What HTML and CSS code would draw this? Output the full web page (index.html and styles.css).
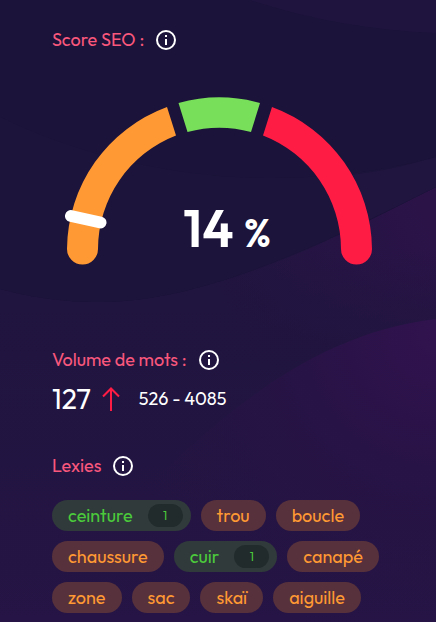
FILE: index.html
```html
<!DOCTYPE html>
<html lang="fr">
<head>
    <meta charset="UTF-8">
    <title>Score SEO</title>
    <meta name="viewport" content="width=device-width, initial-scale=1.0">
    <link rel="stylesheet" href="styles.css">
</head>
<body>
<!-- waves -->
<svg class="waves" viewBox="0 0 436 622" preserveAspectRatio="none" aria-hidden="true">
    <defs>
        <linearGradient id="base" gradientUnits="userSpaceOnUse" x1="0" y1="300" x2="0" y2="622">
            <stop offset="0" stop-color="#20153f"/>
            <stop offset="1" stop-color="#251445"/>
        </linearGradient>
        <linearGradient id="band" gradientUnits="userSpaceOnUse" x1="230" y1="320" x2="430" y2="220">
            <stop offset="0" stop-color="#2b1348" stop-opacity="0"/>
            <stop offset="1" stop-color="#2b1348"/>
        </linearGradient>
        <linearGradient id="fade" gradientUnits="userSpaceOnUse" x1="0" y1="250" x2="0" y2="370">
            <stop offset="0" stop-color="#20153f" stop-opacity="0"/>
            <stop offset="1" stop-color="#20153f"/>
        </linearGradient>
        <radialGradient id="glow" gradientUnits="userSpaceOnUse" cx="436" cy="335" r="330">
            <stop offset="0" stop-color="#31124e"/>
            <stop offset="0.4" stop-color="#281346"/>
            <stop offset="1" stop-color="#241443" stop-opacity="0"/>
        </radialGradient>
    </defs>
    <rect width="436" height="622" fill="url(#base)"/>
    <path d="M150 300C270 275 350 230 436 187V370H150Z" fill="url(#band)"/>
    <path d="M150 250H436V370H150Z" fill="url(#fade)"/>
    <path d="M436 319C300 335 210 430 130 500L100 622H436Z" fill="url(#glow)"/>
    <path d="M0 0H436V187C350 230 210 303 100 302C60 302 25 296 0 289Z" fill="#1b1339"/>
    <path d="M0 117C130 180 290 196 436 157V187C350 230 210 303 100 302C60 302 25 296 0 289Z" fill="#1c143a"/>
    <path d="M436 157V187C410 200 385 212 360 224L330 177C368 174 402 167 436 157Z" fill="#1f153e"/>
    <path d="M250 0C310 20 375 31 436 33V0Z" fill="#1f143e"/>
</svg>

<main class="panel">
    <section class="score">
        <div class="title">
            <h2>Score SEO :</h2>
            <button class="info" type="button" aria-label="Score SEO">
                <svg viewBox="0 0 20 20"><circle cx="10" cy="10" r="9"/><path d="M10 9v6M10 5v2"/></svg>
            </button>
        </div>
        <div class="gauge">
            <svg viewBox="0 0 308 170" aria-hidden="true">
                <path fill="#ff9933" d="M102 12A152.5 152.5 0 0 0 2 154A15.5 15.5 0 0 0 33 154A122 122 0 0 1 111 40.5Z"/>
                <path fill="#77df5a" d="M113.5 8A152.5 152.5 0 0 1 195 8L186 37A122 122 0 0 0 122.5 37Z"/>
                <path fill="#ff1c44" d="M207 12A152.5 152.5 0 0 1 307 154A15.5 15.5 0 0 1 276 154A122 122 0 0 0 198 40.5Z"/>
                <path class="needle" d="M6 121L35.5 127.5"/>
            </svg>
            <p class="value">14 <span>%</span></p>
        </div>
    </section>

    <section class="volume">
        <div class="title">
            <h2>Volume de mots :</h2>
            <button class="info" type="button" aria-label="Volume de mots">
                <svg viewBox="0 0 20 20"><circle cx="10" cy="10" r="9"/><path d="M10 9v6M10 5v2"/></svg>
            </button>
        </div>
        <div class="words">
            <strong>127</strong>
            <svg class="arrow" viewBox="0 0 18 24" aria-hidden="true"><path d="M9 24V2M1 9.5L9 1.5L17 9.5"/></svg>
            <span class="range">526 - 4085</span>
        </div>
    </section>

    <section class="lexies">
        <div class="title">
            <h2>Lexies</h2>
            <button class="info" type="button" aria-label="Lexies">
                <svg viewBox="0 0 20 20"><circle cx="10" cy="10" r="9"/><path d="M10 9v6M10 5v2"/></svg>
            </button>
        </div>
        <ul class="tags">
            <li class="tag found">ceinture <span class="count">1</span></li>
            <li class="tag">trou</li>
            <li class="tag">boucle</li>
            <li class="tag">chaussure</li>
            <li class="tag found">cuir <span class="count">1</span></li>
            <li class="tag">canapé</li>
            <li class="tag">zone</li>
            <li class="tag">sac</li>
            <li class="tag">skaï</li>
            <li class="tag">aiguille</li>
        </ul>
    </section>
</main>
</body>
</html>
```
FILE: styles.css
```css
* {
    margin: 0;
    padding: 0;
    box-sizing: border-box;
}

body {
    position: relative;
    min-height: 100vh;
    background: #251445;
    color: white;
    font-family: Outfit, Lato, sans-serif;
    font-size: 18px;
    line-height: 24px;
}

.waves {
    position: absolute;
    top: 0;
    left: 0;
    width: 100%;
    height: 100%;
    z-index: -1;
}

.panel {
    padding: 28px 52px 9px;
}

/* titles */
.title {
    display: flex;
    align-items: center;
    gap: 12px;
}

.title h2 {
    color: #f9577c;
    font-size: 18px;
    font-weight: 400;
}

.info {
    width: 20px;
    height: 20px;
    border: none;
    background: none;
    cursor: pointer;
}

.info svg {
    display: block;
    fill: none;
    stroke: white;
    stroke-width: 2;
}

/* gauge */
.gauge {
    position: relative;
    max-width: 308px;
    margin: 43px auto 0 13px;
}

.gauge svg {
    display: block;
    width: 100%;
}

.needle {
    fill: none;
    stroke: white;
    stroke-width: 12;
    stroke-linecap: round;
}

.value {
    position: absolute;
    bottom: 1px;
    left: 0;
    width: 100%;
    padding-left: 16px;
    text-align: center;
    font-size: 52px;
    font-weight: 600;
    line-height: 64px;
}

.value span {
    font-size: 40px;
}

/* words */
.volume {
    margin-top: 83px;
}

.words {
    display: flex;
    align-items: center;
    gap: 11px;
    height: 32px;
    margin-top: 11px;
}

.words strong {
    font-size: 28px;
    font-weight: 400;
    line-height: 32px;
}

.arrow {
    width: 18px;
    height: 24px;
    margin-right: 8px;
    fill: none;
    stroke: #ff1c44;
    stroke-width: 2;
}

/* tags */
.lexies {
    margin-top: 39px;
}

.tags {
    display: flex;
    flex-wrap: wrap;
    gap: 10px;
    margin-top: 22px;
    list-style: none;
}

.tag {
    display: flex;
    align-items: center;
    height: 31px;
    padding: 0 16px;
    border-radius: 16px;
    background: #57313b;
    color: #ff9933;
}

.found {
    gap: 15px;
    padding-right: 8px;
    background: #303a3b;
    color: #4bcb3b;
}

.count {
    width: 35px;
    border-radius: 12px;
    background: #222b2b;
    font-size: 12px;
    line-height: 23px;
    text-align: center;
}
```
